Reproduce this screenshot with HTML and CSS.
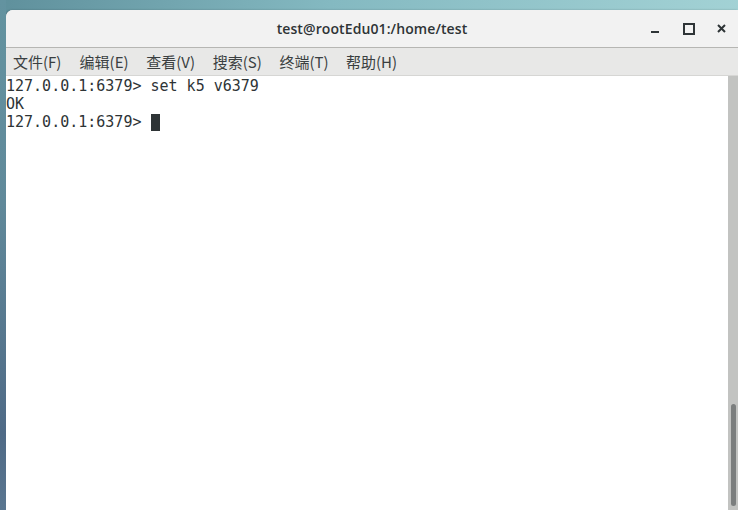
FILE: index.html
```html
<!DOCTYPE html>
<html lang="zh-CN">
<head>
  <meta charset="UTF-8">
  <title>test@rootEdu01:/home/test</title>
  <link rel="stylesheet" href="styles.css">
</head>
<body>
  <div class="desktop">
    <div class="window">
      <!-- Title bar -->
      <div class="titlebar">
        <span class="title">test@rootEdu01:/home/test</span>
        <div class="controls">
          <span class="btn btn-min"></span>
          <span class="btn btn-max"></span>
          <span class="btn btn-close">
            <svg width="9" height="9" viewBox="0 0 9 9">
              <path d="M1 1 L8 8 M8 1 L1 8" stroke="#2e3436" stroke-width="2"/>
            </svg>
          </span>
        </div>
      </div>

      <!-- Menu bar -->
      <ul class="menubar">
        <li>文件(F)</li>
        <li>编辑(E)</li>
        <li>查看(V)</li>
        <li>搜索(S)</li>
        <li>终端(T)</li>
        <li>帮助(H)</li>
      </ul>

      <!-- Terminal -->
      <div class="terminal">
        <pre class="screen">127.0.0.1:6379&gt; set k5 v6379
OK
127.0.0.1:6379&gt; <span class="cursor"></span></pre>
        <div class="scrollbar">
          <div class="thumb"></div>
        </div>
      </div>
    </div>
  </div>
</body>
</html>
```

FILE: styles.css
```css
* {
  margin: 0;
  padding: 0;
  box-sizing: border-box;
}

html, body {
  width: 738px;
  height: 510px;
  overflow: hidden;
}

/* Desktop background */
.desktop {
  width: 738px;
  height: 510px;
  padding: 10px 0 0 6px;
  background: linear-gradient(100deg, #5f909c 0%, #84b9c1 40%, #a9d7d9 100%);
  position: relative;
}

.desktop::before {
  content: "";
  position: absolute;
  left: 0;
  top: 0;
  width: 6px;
  height: 510px;
  background: linear-gradient(180deg, #6393a0 0%, #60899a 40%, #4f6a86 85%, #5a7690 100%);
}

/* Window */
.window {
  width: 732px;
  height: 500px;
  background: #fff;
  border-top-left-radius: 7px;
  display: flex;
  flex-direction: column;
  overflow: hidden;
  box-shadow: -1px 0 2px rgba(0,0,0,0.25);
}

.titlebar {
  height: 38px;
  background: #f2f2f2;
  border-bottom: 1px solid #b6b6b3;
  display: flex;
  align-items: center;
  justify-content: center;
  position: relative;
}

.title {
  font-family: "Open Sans", "Noto Sans", sans-serif;
  font-size: 14px;
  font-weight: 600;
  color: #2e3436;
  letter-spacing: 0.1px;
}

.controls {
  position: absolute;
  right: 0;
  top: 0;
  height: 37px;
  display: flex;
  align-items: center;
}

.btn {
  width: 34px;
  height: 20px;
  display: flex;
  align-items: center;
  justify-content: center;
}

.btn-min::after {
  content: "";
  width: 8px;
  height: 2px;
  background: #2e3436;
  margin-top: 7px;
}

.btn-max::after {
  content: "";
  width: 8px;
  height: 8px;
  border: 2px solid #2e3436;
}

.btn-close {
  width: 30px;
  margin-right: 2px;
}

/* Menu bar */
.menubar {
  list-style: none;
  display: flex;
  height: 28px;
  align-items: center;
  background: #e8e8e7;
  border-bottom: 1px solid #d6d6d4;
  padding-left: 7px;
  font-family: "Noto Sans CJK SC", "Noto Sans", sans-serif;
  font-size: 15px;
  color: #3a3f41;
}

.menubar li {
  width: 66.6px;
  white-space: nowrap;
}

/* Terminal area */
.terminal {
  flex: 1;
  display: flex;
  background: #fff;
}

.screen {
  flex: 1;
  font-family: "DejaVu Sans Mono", monospace;
  font-size: 15px;
  line-height: 18px;
  color: #2e3436;
  padding-top: 1px;
}

.cursor {
  display: inline-block;
  width: 9px;
  height: 17px;
  background: #2e3436;
  vertical-align: -4px;
}

.scrollbar {
  width: 10px;
  background: #c2c3c1;
  display: flex;
  flex-direction: column;
  justify-content: flex-end;
  padding: 0 2px 4px 3px;
}

.thumb {
  height: 102px;
  background: #7b7e7e;
  border-radius: 3px;
}
```
